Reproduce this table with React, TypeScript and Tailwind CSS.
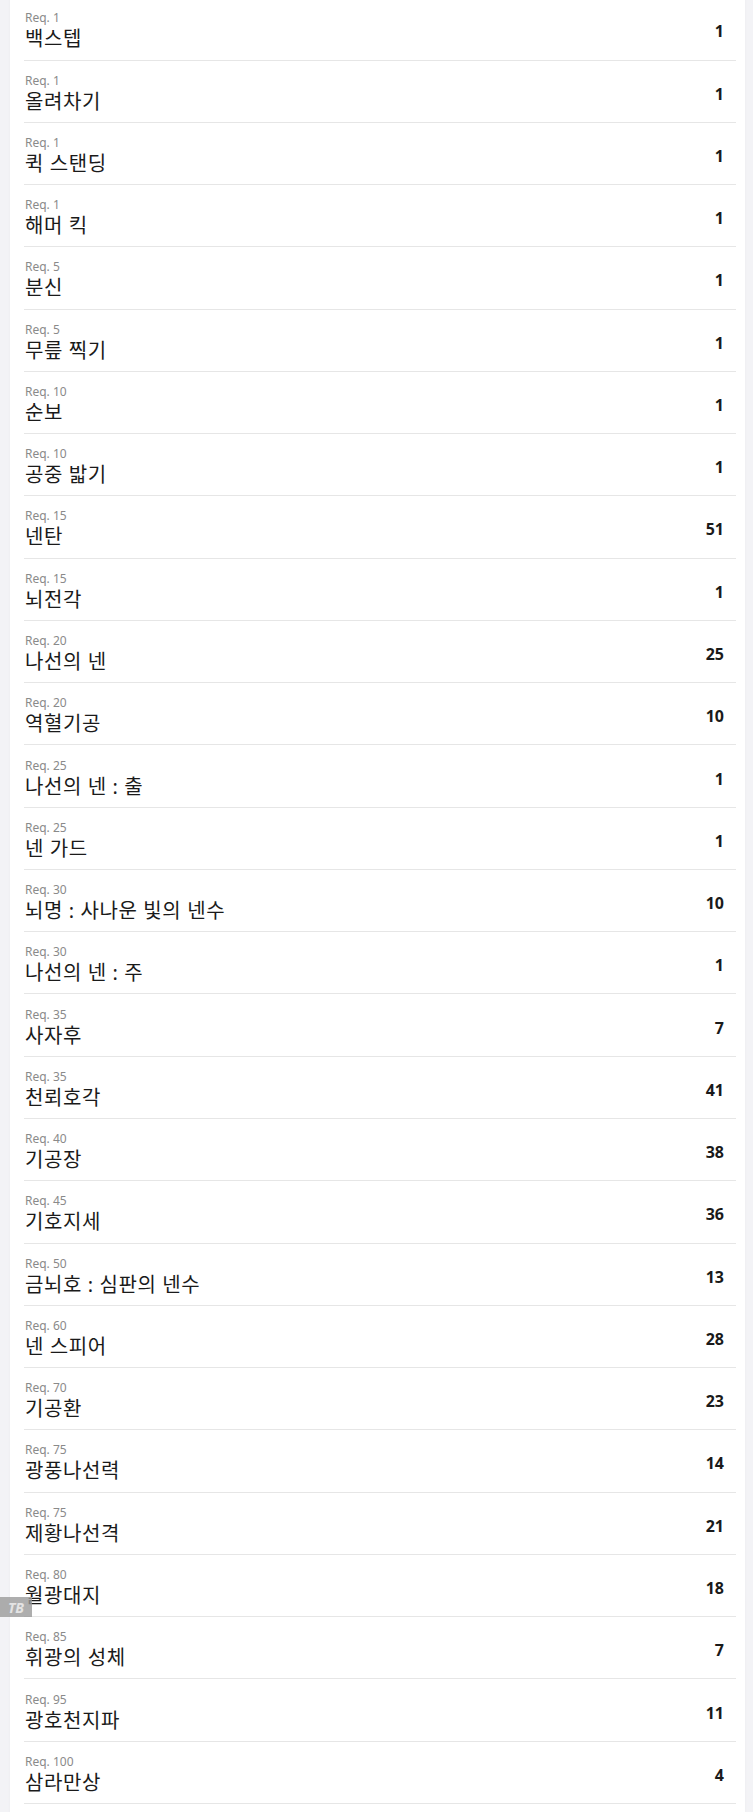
import React from "react";

const skills: [number, string, number][] = [
  [1, "백스텝", 1],
  [1, "올려차기", 1],
  [1, "퀵 스탠딩", 1],
  [1, "해머 킥", 1],
  [5, "분신", 1],
  [5, "무릎 찍기", 1],
  [10, "순보", 1],
  [10, "공중 밟기", 1],
  [15, "넨탄", 51],
  [15, "뇌전각", 1],
  [20, "나선의 넨", 25],
  [20, "역혈기공", 10],
  [25, "나선의 넨 : 출", 1],
  [25, "넨 가드", 1],
  [30, "뇌명 : 사나운 빛의 넨수", 10],
  [30, "나선의 넨 : 주", 1],
  [35, "사자후", 7],
  [35, "천뢰호각", 41],
  [40, "기공장", 38],
  [45, "기호지세", 36],
  [50, "금뇌호 : 심판의 넨수", 13],
  [60, "넨 스피어", 28],
  [70, "기공환", 23],
  [75, "광풍나선력", 14],
  [75, "제황나선격", 21],
  [80, "월광대지", 18],
  [85, "휘광의 성체", 7],
  [95, "광호천지파", 11],
  [100, "삼라만상", 4],
];

export default function App() {
  return (
    <div
      className="relative flex min-h-[1812px] flex-col overflow-hidden bg-[#f3f3f6]"
      style={{ fontFamily: '"Noto Sans", "Noto Sans CJK KR", sans-serif' }}
    >
      <div className="mt-[-1.77px] ml-[10px] w-[735px] flex-1 bg-white pb-[10px] pl-[14px] pr-[9px] shadow-[0_0_3px_rgba(0,0,0,0.04)]">
        {skills.map(([req, name, lv], i) => (
          <div
            key={i}
            className="flex h-[62.27px] items-center border-b border-[#e6e6e6] pr-[12px] pt-[5px]"
          >
            <div className="flex-1 pl-[1px]">
              <div className="text-[12px] leading-[16px] text-[#8a8a8a]">Req. {req}</div>
              <div className="text-[20px] leading-[26px] tracking-[0.6px] text-[#1a1a1a]">{name}</div>
            </div>
            <div className="text-[16px] font-bold text-[#1a1a1a]">{lv}</div>
          </div>
        ))}
      </div>
      <div className="absolute left-0 top-[1597px] flex h-[20px] w-[32px] items-center justify-center bg-[#9a9a9a]/80">
        <span className="text-[14px] font-bold italic text-[#e4e4e4]">TB</span>
      </div>
    </div>
  );
}
